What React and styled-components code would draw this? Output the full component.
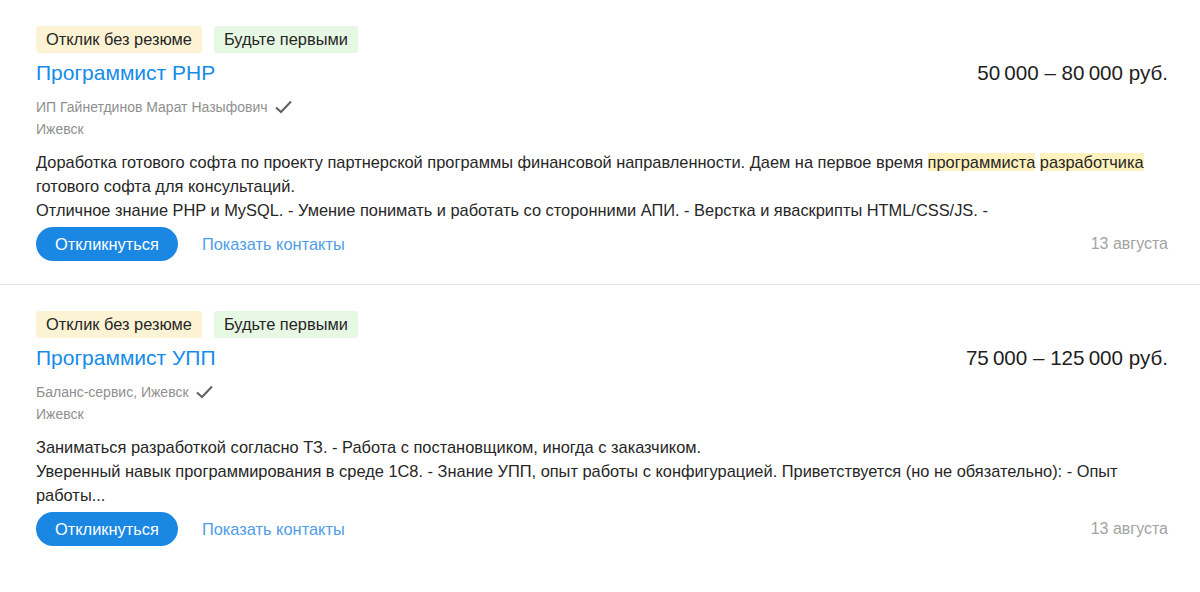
import React from "react";
import styled, { createGlobalStyle } from "styled-components";

const GlobalStyle = createGlobalStyle`
  body {
    margin: 0;
    background: #fff;
    font-family: "Liberation Sans", Arial, sans-serif;
    color: #303030;
  }
`;

const List = styled.div`
  display: flex;
  flex-direction: column;
  width: 1200px;
`;

const Card = styled.div`
  display: flex;
  flex-direction: column;
  padding: 26px 32px 23px 36px;
  border-bottom: ${(props) => (props.last ? "none" : "1px solid #e4e4e4")};
`;

const Tags = styled.div`
  display: flex;
  flex-direction: row;
  gap: 12px;
  margin-bottom: 4px;
`;

const Tag = styled.span`
  display: inline-flex;
  align-items: center;
  height: 27px;
  padding: 0 10px;
  border-radius: 3px;
  font-size: 16.4px;
  color: #262626;
  background: ${(props) => (props.green ? "#e6f7e3" : "#fcf3d4")};
`;

const Header = styled.div`
  display: flex;
  flex-direction: row;
  justify-content: space-between;
  align-items: center;
  height: 32px;
`;

const Title = styled.a`
  font-size: 21px;
  line-height: 32px;
  color: #168be8;
  text-decoration: none;
`;

const Salary = styled.span`
  font-size: 20.6px;
  line-height: 32px;
  color: #1e1e1e;
`;

const Company = styled.div`
  display: flex;
  flex-direction: row;
  align-items: center;
  gap: 6px;
  margin-top: 7px;
  font-size: 14px;
  line-height: 22px;
  color: #8f8f8f;
`;

const City = styled.div`
  font-size: 14px;
  line-height: 22px;
  color: #8f8f8f;
`;

const Description = styled.p`
  margin: 10px 0 0;
  font-size: 16.4px;
  line-height: 24px;
  color: #262626;
  white-space: nowrap;
`;

const Mark = styled.span`
  background: #fff2bf;
`;

const Actions = styled.div`
  display: flex;
  flex-direction: row;
  align-items: center;
  gap: 24px;
  margin-top: 5px;
`;

const Button = styled.button`
  height: 34px;
  padding: 0 19px;
  border: none;
  border-radius: 17px;
  background: #1a87e3;
  color: #fff;
  font-family: "Liberation Sans", Arial, sans-serif;
  font-size: 16.4px;
  cursor: pointer;
`;

const ContactsLink = styled.a`
  font-size: 16.4px;
  color: #4f9de6;
  text-decoration: none;
`;

const DateText = styled.span`
  margin-left: auto;
  font-size: 16px;
  color: #a3a3a3;
`;

const Check = () => (
  <svg width="19" height="16" viewBox="0 0 19 16">
    <path d="M2 8.5 L7 13 L17 2.5" fill="none" stroke="#606060" strokeWidth="2" />
  </svg>
);

const vacancies = [
  {
    title: "Программист PHP",
    salary: "50\u2009000 – 80\u2009000 руб.",
    company: "ИП Гайнетдинов Марат Назыфович",
    city: "Ижевск",
    lines: [
      <>
        Доработка готового софта по проекту партнерской программы финансовой направленности. Даем на первое время{" "}
        <Mark>программиста</Mark> <Mark>разработчика</Mark>
      </>,
      "готового софта для консультаций.",
      "Отличное знание PHP и MySQL. - Умение понимать и работать со сторонними АПИ. - Верстка и яваскрипты HTML/CSS/JS. -",
    ],
    date: "13 августа",
  },
  {
    title: "Программист УПП",
    salary: "75\u2009000 – 125\u2009000 руб.",
    company: "Баланс-сервис, Ижевск",
    city: "Ижевск",
    lines: [
      "Заниматься разработкой согласно ТЗ. - Работа с постановщиком, иногда с заказчиком.",
      "Уверенный навык программирования в среде 1С8. - Знание УПП, опыт работы с конфигурацией. Приветствуется (но не обязательно): - Опыт",
      "работы...",
    ],
    date: "13 августа",
  },
];

export default function App() {
  return (
    <>
      <GlobalStyle />
      <List>
        {vacancies.map((v, i) => (
          <Card key={i} last={i === vacancies.length - 1}>
            <Tags>
              <Tag>Отклик без резюме</Tag>
              <Tag green>Будьте первыми</Tag>
            </Tags>
            <Header>
              <Title href="#">{v.title}</Title>
              <Salary>{v.salary}</Salary>
            </Header>
            <Company>
              {v.company}
              <Check />
            </Company>
            <City>{v.city}</City>
            <Description>
              {v.lines.map((line, j) => (
                <React.Fragment key={j}>
                  {line}
                  {j < v.lines.length - 1 && <br />}
                </React.Fragment>
              ))}
            </Description>
            <Actions>
              <Button>Откликнуться</Button>
              <ContactsLink href="#">Показать контакты</ContactsLink>
              <DateText>{v.date}</DateText>
            </Actions>
          </Card>
        ))}
      </List>
    </>
  );
}
